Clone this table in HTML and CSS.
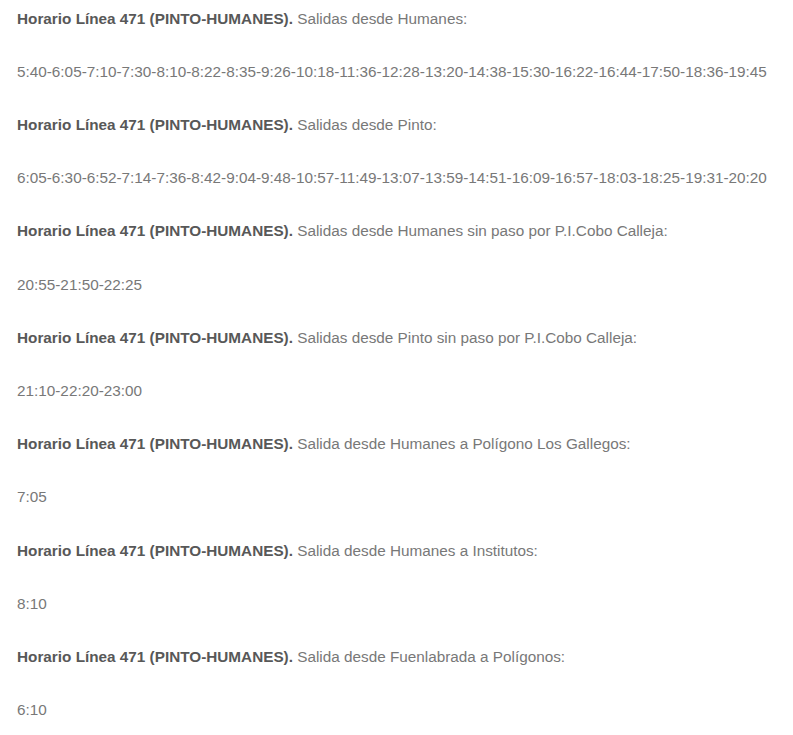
FILE: index.html
```html
<!DOCTYPE html>
<html lang="es">
<head>
<meta charset="utf-8">
<title>Horario Línea 471</title>
<link rel="stylesheet" href="styles.css">
</head>
<body>
<div class="content">
<p><strong>Horario Línea 471 (PINTO-HUMANES).</strong> Salidas desde Humanes:</p>
<p>5:40-6:05-7:10-7:30-8:10-8:22-8:35-9:26-10:18-11:36-12:28-13:20-14:38-15:30-16:22-16:44-17:50-18:36-19:45</p>
<p><strong>Horario Línea 471 (PINTO-HUMANES).</strong> Salidas desde Pinto:</p>
<p>6:05-6:30-6:52-7:14-7:36-8:42-9:04-9:48-10:57-11:49-13:07-13:59-14:51-16:09-16:57-18:03-18:25-19:31-20:20</p>
<p><strong>Horario Línea 471 (PINTO-HUMANES).</strong> Salidas desde Humanes sin paso por P.I.Cobo Calleja:</p>
<p>20:55-21:50-22:25</p>
<p><strong>Horario Línea 471 (PINTO-HUMANES).</strong> Salidas desde Pinto sin paso por P.I.Cobo Calleja:</p>
<p>21:10-22:20-23:00</p>
<p><strong>Horario Línea 471 (PINTO-HUMANES).</strong> Salida desde Humanes a Polígono Los Gallegos:</p>
<p>7:05</p>
<p><strong>Horario Línea 471 (PINTO-HUMANES).</strong> Salida desde Humanes a Institutos:</p>
<p>8:10</p>
<p><strong>Horario Línea 471 (PINTO-HUMANES).</strong> Salida desde Fuenlabrada a Polígonos:</p>
<p>6:10</p>
</div>
</body>
</html>
```
FILE: styles.css
```css
html, body {
  margin: 0;
  padding: 0;
  background: #ffffff;
}
.content {
  padding: 6.5px 0 0 17px;
  font-family: "Liberation Sans", Arial, sans-serif;
  font-size: 15.3px;
  color: #787878;
}
.content p {
  margin: 0 0 29px;
  line-height: 24.2px;
  white-space: nowrap;
}
.content strong {
  color: #585858;
  font-weight: bold;
}
```
